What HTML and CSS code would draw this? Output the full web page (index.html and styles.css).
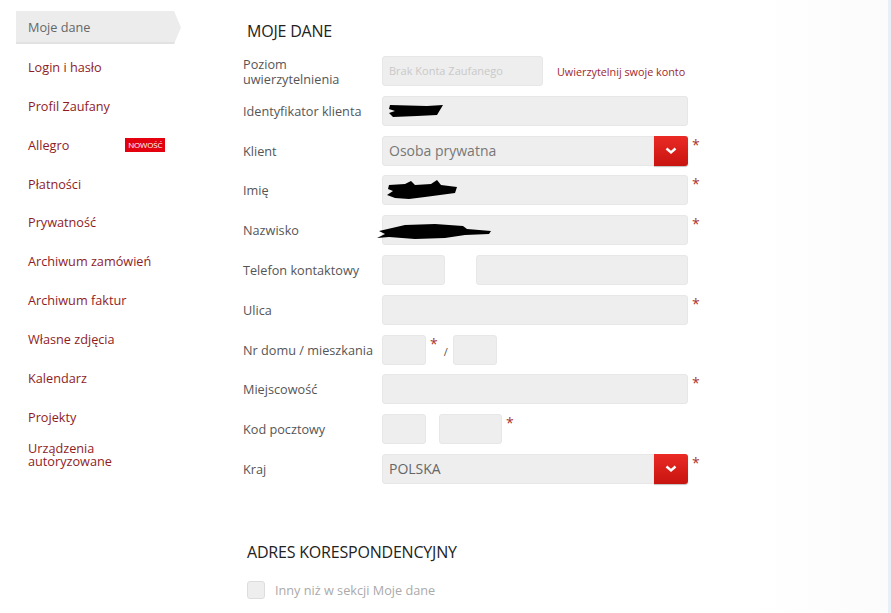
FILE: index.html
```html
<!DOCTYPE html>
<html>
	<head>
		<meta charset="utf-8" />
		<title>Moje dane</title>
		<link rel="stylesheet" href="styles.css">
	</head>
	<body>
		<div class="page">
			<ul class="menu">
				<li class="on"><a href="javascript:;">Moje dane</a></li>
				<li><a href="javascript:;">Login i hasło</a></li>
				<li><a href="javascript:;">Profil Zaufany</a></li>
				<li><a href="javascript:;">Allegro</a><span class="badge">NOWOŚĆ</span></li>
				<li><a href="javascript:;">Płatności</a></li>
				<li><a href="javascript:;">Prywatność</a></li>
				<li><a href="javascript:;">Archiwum zamówień</a></li>
				<li><a href="javascript:;">Archiwum faktur</a></li>
				<li><a href="javascript:;">Własne zdjęcia</a></li>
				<li><a href="javascript:;">Kalendarz</a></li>
				<li><a href="javascript:;">Projekty</a></li>
				<li class="last"><a href="javascript:;">Urządzenia<br>autoryzowane</a></li>
			</ul>

			<div class="main">
				<h2>Moje dane</h2>

				<div class="row">
					<label class="two">Poziom<br>uwierzytelnienia</label>
					<div class="field short disabled">Brak Konta Zaufanego</div>
					<a class="auth" href="javascript:;">Uwierzytelnij swoje konto</a>
				</div>
				<div class="row">
					<label>Identyfikator klienta</label>
					<div class="field wide">
						<svg class="scribble s1" width="58" height="16" viewBox="0 0 58 16"><path d="M3 2 L40 3 L56 2 L50 12 L30 13 L6 14 L2 10 L8 8 L2 6 Z" fill="#000"/></svg>
					</div>
				</div>
				<div class="row">
					<label>Klient</label>
					<div class="field wide select">Osoba prywatna<span class="drop"><svg width="12" height="8" viewBox="0 0 12 8"><path d="M1.5 1.5 L6 5.5 L10.5 1.5" fill="none" stroke="#fff" stroke-width="2.4"/></svg></span></div>
					<span class="req">*</span>
				</div>
				<div class="row">
					<label>Imię</label>
					<div class="field wide">
						<svg class="scribble s2" width="74" height="22" viewBox="0 0 74 22"><path d="M4 6 L20 5 L26 2 L30 6 L46 5 L52 1 L56 6 L72 8 L70 14 L40 18 L24 20 L10 19 L2 16 L8 12 L3 10 Z" fill="#000"/></svg>
					</div>
					<span class="req">*</span>
				</div>
				<div class="row">
					<label>Nazwisko</label>
					<div class="field wide">
						<svg class="scribble s3" width="120" height="20" viewBox="0 0 120 20"><path d="M4 10 L30 4 L60 3 L88 5 L92 8 L116 10 L114 13 L90 14 L70 17 L40 18 L14 16 L2 17 L10 13 Z" fill="#000"/></svg>
					</div>
					<span class="req">*</span>
				</div>
				<div class="row">
					<label>Telefon kontaktowy</label>
					<div class="field phone1"></div>
					<div class="field phone2"></div>
				</div>
				<div class="row">
					<label>Ulica</label>
					<div class="field wide"></div>
					<span class="req">*</span>
				</div>
				<div class="row">
					<label>Nr domu / mieszkania</label>
					<div class="field tiny"></div>
					<span class="req">*</span>
					<span class="slash">/</span>
					<div class="field tiny"></div>
				</div>
				<div class="row">
					<label>Miejscowość</label>
					<div class="field wide"></div>
					<span class="req">*</span>
				</div>
				<div class="row">
					<label>Kod pocztowy</label>
					<div class="field zip1"></div>
					<div class="field zip2"></div>
					<span class="req">*</span>
				</div>
				<div class="row">
					<label>Kraj</label>
					<div class="field wide select dark">POLSKA<span class="drop"><svg width="12" height="8" viewBox="0 0 12 8"><path d="M1.5 1.5 L6 5.5 L10.5 1.5" fill="none" stroke="#fff" stroke-width="2.4"/></svg></span></div>
					<span class="req">*</span>
				</div>

				<h2 class="second">Adres korespondencyjny</h2>
				<div class="check">
					<span class="box"></span>
					<span>Inny niż w sekcji Moje dane</span>
				</div>
			</div>
		</div>
	</body>
</html>
```

FILE: styles.css
```css
*{
	margin: 0;
	padding: 0;
	text-decoration: none;
	box-sizing: border-box;
}
html{
	background: #e9eef7;
}
body{
	font-family: "Open Sans", "Noto Sans", sans-serif;
	font-size: 12.7px;
	color: #555;
}
.page{
	width: 888px;
	height: 613px;
	display: flex;
	background: linear-gradient(to right, #fff 0%, #fff 85%, #fbfbfb 100%);
	overflow: hidden;
}

/* lewe menu */
.menu{
	list-style: none;
	width: 243px;
	padding: 12px 0 0 16px;
}
.menu li{
	width: 165px;
	height: 33px;
	margin-bottom: 5.9px;
	display: flex;
	align-items: center;
	padding-left: 12px;
	line-height: 13px;
}
.menu li.last{
	margin-top: -1px;
}
.menu li a{
	color: #8e1c1f;
}
.menu li.on{
	margin-top: -1px;
	margin-bottom: 6.9px;
	background: #ececec;
	clip-path: polygon(0 0, 158px 0, 165px 50%, 158px 100%, 0 100%);
	box-shadow: inset 0 -2px 0 #e2e2e2;
}
.menu li.on a{
	color: #666;
}
.badge{
	margin-left: 56px;
	background: #e3000f;
	color: #fff;
	font-size: 8px;
	line-height: 14px;
	padding: 0 3px;
	letter-spacing: -0.2px;
}

/* formularz */
.main{
	flex: 1;
	padding-top: 20px;
}
.main h2{
	font-size: 16px;
	font-weight: normal;
	text-transform: uppercase;
	color: #222;
	line-height: 22px;
	padding-left: 4px;
	margin-bottom: 14px;
	letter-spacing: -0.2px;
}
.main h2.second{
	margin-top: 57px;
	margin-bottom: 18px;
}
.row{
	display: flex;
	align-items: center;
	height: 30px;
	margin-bottom: 9.8px;
}
.row label{
	width: 139px;
	flex-shrink: 0;
}
.row label.two{
	line-height: 15px;
	padding-top: 1px;
}
.field{
	position: relative;
	height: 30px;
	background: #eee;
	border: 1px solid #e7e7e7;
	border-radius: 3px;
	padding-left: 6px;
	line-height: 28px;
}
.wide{
	width: 306px;
}
.short{
	width: 161px;
}
.disabled{
	color: #c9c9c9;
	font-size: 11px;
}
.auth{
	margin-left: 14px;
	color: #a0262b;
	font-size: 10.8px;
}
.select{
	font-size: 14px;
	color: #777;
}
.select.dark{
	color: #666;
}
.drop{
	position: absolute;
	right: -1px;
	top: -1px;
	width: 34px;
	height: 30px;
	background: linear-gradient(#ea2a25, #c8140f);
	border-radius: 0 3px 3px 0;
	display: flex;
	align-items: center;
	justify-content: center;
	box-shadow: 0 1px 1px rgba(0,0,0,0.25);
}
.req{
	align-self: flex-start;
	color: #a8352f;
	font-size: 14px;
	line-height: 14px;
	margin-left: 4px;
	margin-top: 2px;
}
.phone1{
	width: 63px;
}
.phone2{
	width: 212px;
	margin-left: 31px;
}
.tiny{
	width: 44px;
}
.slash{
	margin: 3px 5px 0 6px;
	font-size: 11px;
}
.zip1{
	width: 44px;
}
.zip2{
	width: 63px;
	margin-left: 13px;
}
.scribble{
	position: absolute;
}
.s1{
	left: 4px;
	top: 6px;
}
.s2{
	left: 2px;
	top: 3px;
}
.s3{
	left: -8px;
	top: 5px;
}

.check{
	display: flex;
	align-items: center;
	padding-left: 4px;
	color: #aaa;
}
.check .box{
	width: 18px;
	height: 18px;
	background: #eee;
	border: 1px solid #ddd;
	border-radius: 3px;
	margin-right: 10px;
}
```
